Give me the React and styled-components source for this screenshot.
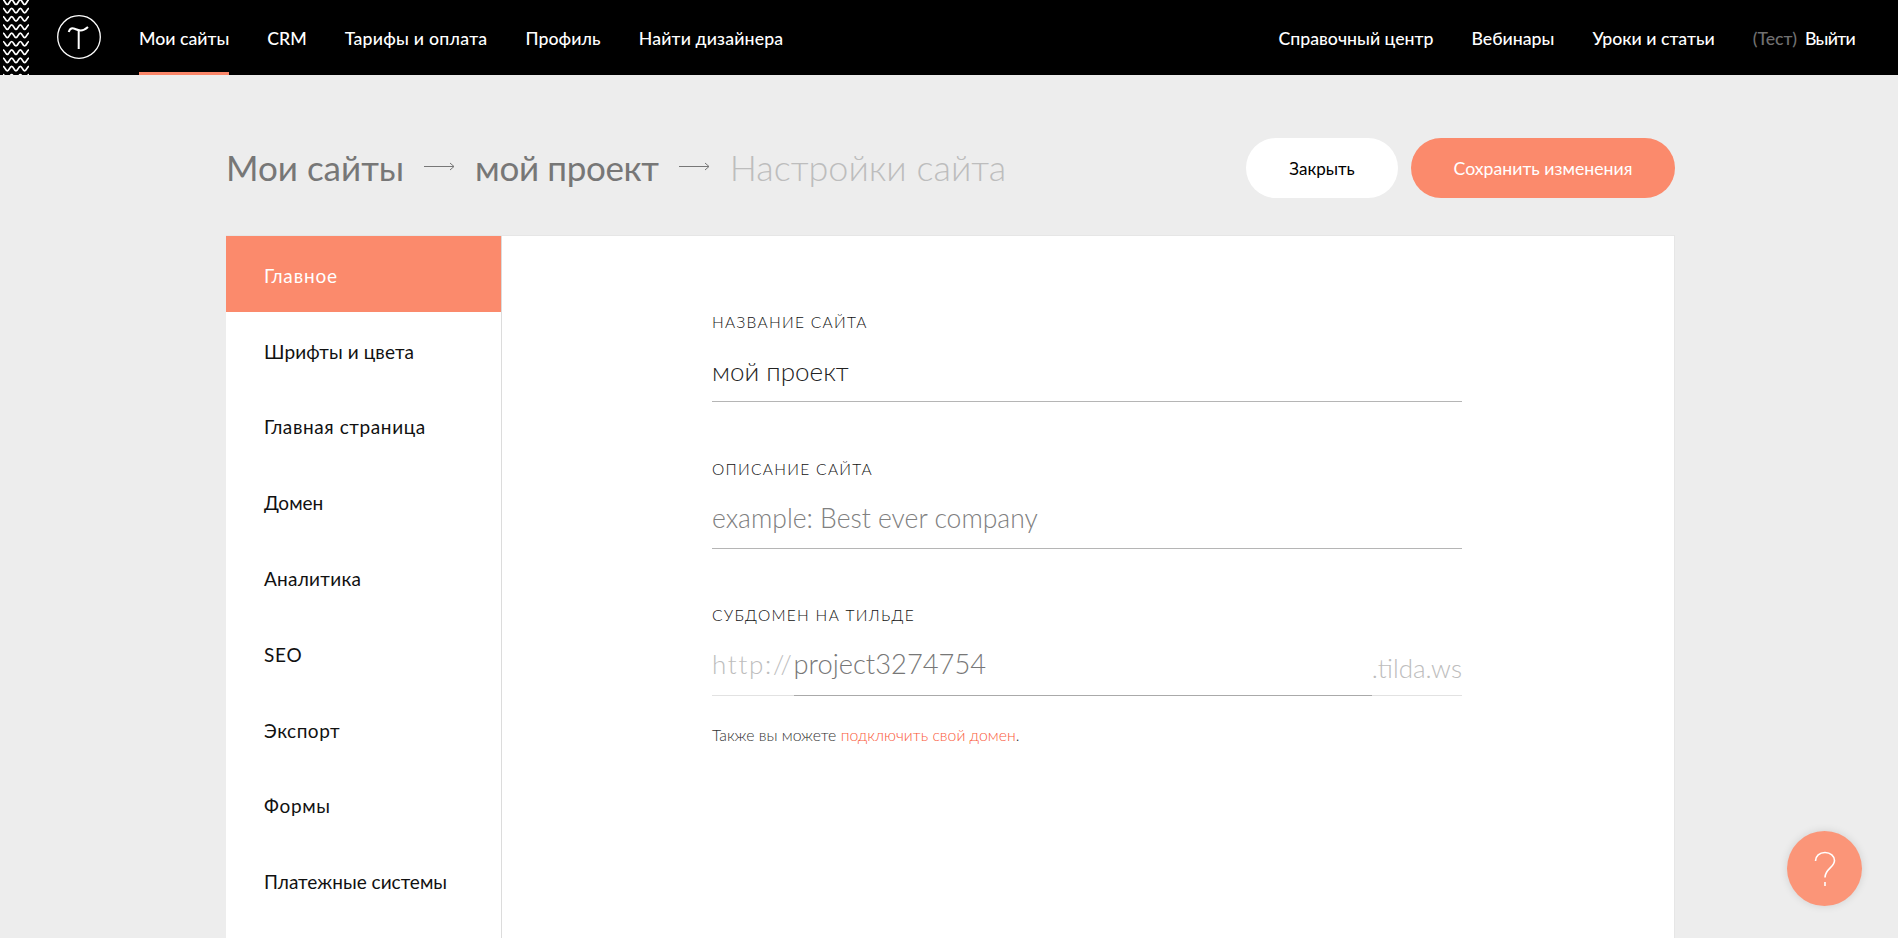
import React from "react";
import styled, { createGlobalStyle } from "styled-components";

const Global = createGlobalStyle`
  html, body { margin: 0; padding: 0; height: 100%; overflow: hidden; background: #ededed; }
  body { font-family: "Lato", "Liberation Sans", sans-serif; color: #111; }
  * { box-sizing: border-box; }
`;

const Page = styled.div`
  height: 100vh;
  display: flex;
  flex-direction: column;
  overflow: hidden;
`;

const Header = styled.header`
  height: 75px;
  flex: none;
  background: #000;
  display: flex;
  align-items: stretch;
  padding-left: 3px;
  padding-right: 43px;
`;

const Wave = styled.svg`
  width: 26px;
  height: 75px;
  flex: none;
`;

const Logo = styled.svg`
  width: 46px;
  height: 46px;
  flex: none;
  align-self: center;
  margin-left: 27px;
  margin-right: 37px;
  margin-top: -1px;
`;

const Nav = styled.nav`
  display: flex;
  gap: 38px;
`;

const NavRight = styled(Nav)`
  margin-left: auto;
`;

const NavLink = styled.a`
  display: flex;
  align-items: center;
  height: 75px;
  padding-top: 1px;
  font-size: 17.7px;
  font-weight: 500;
  letter-spacing: ${p => p.$ls || 0}px;
  color: #fff;
  white-space: nowrap;
  border-bottom: 3px solid ${p => (p.$active ? "#fa8669" : "transparent")};
  border-top: 3px solid transparent;
`;

const Muted = styled.span`
  color: #707070;
  letter-spacing: 0;
  margin-right: 8px;
`;

const Main = styled.main`
  flex: 1;
  min-height: 0;
  width: 1449px;
  margin-left: 226px;
  display: flex;
  flex-direction: column;
`;

const TitleRow = styled.div`
  height: 160px;
  flex: none;
  display: flex;
  align-items: center;
  padding-top: 26px;
`;

const Crumbs = styled.div`
  display: flex;
  align-items: center;
  flex: 1;
  margin-top: -3px;
  white-space: nowrap;
`;

const Crumb = styled.span`
  font-size: ${p => (p.$light ? 36 : 35)}px;
  letter-spacing: ${p => p.$ls || 0}px;
  font-weight: ${p => (p.$light ? 300 : 400)};
  color: ${p => (p.$light ? "#bdbdbd" : "#777")};
`;

const Arrow = styled.svg`
  width: 31px;
  height: 11px;
  margin: 0 20px;
  flex: none;
`;

const Pill = styled.button`
  height: 60px;
  width: ${p => p.$w}px;
  border: 0;
  border-radius: 30px;
  margin-left: ${p => p.$ml || 0}px;
  background: ${p => (p.$primary ? "#fb8a6c" : "#fff")};
  color: ${p => (p.$primary ? "#fff" : "#000")};
  font-family: inherit;
  font-size: ${p => (p.$primary ? 17.7 : 17)}px;
  font-weight: 400;
  flex: none;
`;

const Card = styled.div`
  flex: 1;
  min-height: 0;
  background: #fff;
  border: 1px solid #e6e6e6;
  border-left: 0;
  border-bottom: 0;
  display: flex;
  overflow: hidden;
`;

const Side = styled.aside`
  width: 276px;
  flex: none;
  border-right: 1px solid #dcdcdc;
`;

const SideItem = styled.div`
  height: 75.8px;
  display: flex;
  align-items: center;
  padding-left: 38px;
  padding-top: 3px;
  font-size: 19px;
  font-weight: 400;
  letter-spacing: ${p => p.$ls || 0}px;
  color: ${p => (p.$active ? "#fff" : "#111")};
  background: ${p => (p.$active ? "#fb8a6c" : "transparent")};
`;

const Content = styled.div`
  width: 750px;
  margin-left: 210px;
  padding-top: 76px;
`;

const Field = styled.div`
  margin-bottom: 56.5px;
`;

const Label = styled.div`
  font-size: 15.5px;
  line-height: 20px;
  font-weight: 300;
  letter-spacing: 1.3px;
  text-transform: uppercase;
  color: #111;
`;

const Value = styled.div`
  height: 70px;
  padding-top: 23px;
  font-size: ${p => (p.$placeholder ? 26.5 : 26)}px;
  line-height: 32px;
  font-weight: 300;
  color: ${p => (p.$placeholder ? "#808080" : "#222")};
  border-bottom: 1px solid #b5b5b5;
`;

const Domain = styled.div`
  display: flex;
  height: 71px;
`;

const Segment = styled.div`
  height: 71px;
  flex: ${p => (p.$grow ? 1 : "none")};
  padding-top: ${p => p.$pt || 23}px;
  font-size: ${p => (p.$grow ? 27.3 : 26)}px;
  letter-spacing: ${p => p.$ls || 0}px;
  line-height: 32px;
  font-weight: 300;
  color: ${p => (p.$grow ? "#777" : "#bdbdbd")};
  border-bottom: 1px solid ${p => (p.$grow ? "#aaa" : "#e2e2e2")};
`;

const Hint = styled.div`
  font-size: 15.8px;
  line-height: 20px;
  font-weight: 300;
  margin-top: 29px;
  color: #333;
`;

const HintLink = styled.span`
  color: #fa5a3a;
`;

const Help = styled.div`
  position: fixed;
  left: 1787px;
  top: 831px;
  width: 75px;
  height: 75px;
  border-radius: 50%;
  background: #fb9578;
  box-shadow: 0 0 8px rgba(0, 0, 0, 0.12);
  display: flex;
  align-items: center;
  justify-content: center;
`;

const items = [
  ["Главное", 0.85],
  ["Шрифты и цвета", 0.1],
  ["Главная страница", 0.6],
  ["Домен", 0],
  ["Аналитика", 0.27],
  ["SEO", 0.8],
  ["Экспорт", 0.5],
  ["Формы", 0.7],
  ["Платежные системы", 0],
];

function WaveArt() {
  const rows = [];
  const s = "c2 0 2.330 4.500 4.330 4.500 s2.330 -4.500 4.330 -4.500";
  for (let y = 0; y < 80; y += 8.3) {
    rows.push(<path key={y} d={`M0 ${y.toFixed(1)} ${s} ${s} ${s}`} />);
  }
  return (
    <Wave viewBox="0 0 26 75" fill="none" stroke="#fff" strokeWidth="1.7">
      {rows}
    </Wave>
  );
}

function ArrowIcon() {
  return (
    <Arrow viewBox="0 0 31 11" fill="none" stroke="#777" strokeWidth="1">
      <path d="M0 5.5H30M26 2l4 3.5-4 3.5" />
    </Arrow>
  );
}

export default function App() {
  return (
    <Page>
      <Global />
      <Header>
        <WaveArt />
        <Logo viewBox="0 0 46 46" fill="none" stroke="#fff">
          <circle cx="23" cy="23" r="21.3" strokeWidth="1.3" />
          <path d="M12.7 18c1-3 3-4 5-3.500s4 2 7 2 5-1.500 7.300-3.500" strokeWidth="2" />
          <path d="M22.700 16.500V35" strokeWidth="2" />
        </Logo>
        <Nav>
          <NavLink $active>Мои сайты</NavLink>
          <NavLink>CRM</NavLink>
          <NavLink $ls={0.25}>Тарифы и оплата</NavLink>
          <NavLink $ls={0.1}>Профиль</NavLink>
          <NavLink $ls={0.15}>Найти дизайнера</NavLink>
        </Nav>
        <NavRight>
          <NavLink>Справочный центр</NavLink>
          <NavLink>Вебинары</NavLink>
          <NavLink>Уроки и статьи</NavLink>
          <NavLink $ls={-0.7}><Muted>(Тест)</Muted>Выйти</NavLink>
        </NavRight>
      </Header>
      <Main>
        <TitleRow>
          <Crumbs>
            <Crumb>Мои сайты</Crumb>
            <ArrowIcon />
            <Crumb $ls={-0.35}>мой проект</Crumb>
            <ArrowIcon />
            <Crumb $light>Настройки сайта</Crumb>
          </Crumbs>
          <Pill $w={152}>Закрыть</Pill>
          <Pill $w={264} $ml={13} $primary>Сохранить изменения</Pill>
        </TitleRow>
        <Card>
          <Side>
            {items.map(([t, ls], i) => (
              <SideItem key={t} $ls={ls} $active={i === 0}>{t}</SideItem>
            ))}
          </Side>
          <Content>
            <Field>
              <Label>Название сайта</Label>
              <Value>мой проект</Value>
            </Field>
            <Field>
              <Label>Описание сайта</Label>
              <Value $placeholder>example: Best ever company</Value>
            </Field>
            <div>
              <Label>Субдомен на тильде</Label>
              <Domain>
                <Segment $ls={1.7}>http://</Segment>
                <Segment $grow>project3274754</Segment>
                <Segment $pt={27}>.tilda.ws</Segment>
              </Domain>
              <Hint>Также вы можете <HintLink>подключить свой домен</HintLink>.</Hint>
            </div>
          </Content>
        </Card>
      </Main>
      <Help>
        <svg width="22" height="36" viewBox="0 0 22 36" fill="none" stroke="#fff" strokeWidth="1.6">
          <path d="M1.5 10c0-5 4-8.5 9.5-8.5s9.5 3.500 9.500 8c0 7-9.500 8-9.500 17" />
          <path d="M11 31v4" />
        </svg>
      </Help>
    </Page>
  );
}
